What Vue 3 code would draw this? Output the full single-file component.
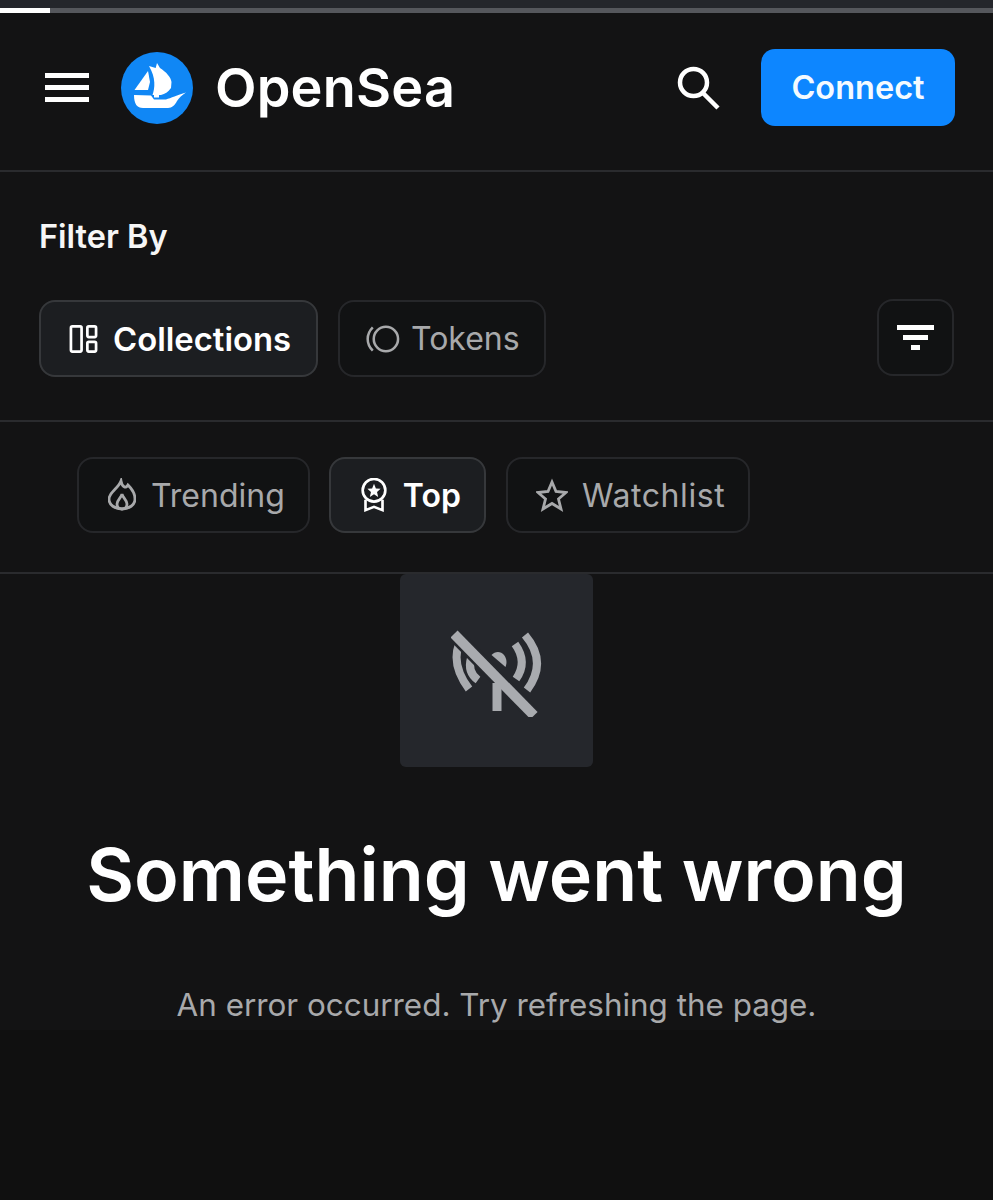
<script setup>
const filters = [
  { label: 'Collections', icon: 'collections', active: true },
  { label: 'Tokens', icon: 'tokens', active: false }
]
const tabs = [
  { label: 'Trending', icon: 'flame', active: false },
  { label: 'Top', icon: 'award', active: true },
  { label: 'Watchlist', icon: 'star', active: false }
]
</script>

<template>
  <div class="page">
    <div class="status"></div>
    <div class="progress"><div class="progress-fill"></div></div>

    <header class="header">
      <button class="menu" aria-label="Menu">
        <span></span><span></span><span></span>
      </button>
      <svg class="logo" viewBox="0 0 72 72">
        <circle cx="36" cy="36" r="36" fill="#1087f5" />
        <path d="M13.500 38 L27 19 L29 30 L27 38 Z" fill="#fff" />
        <path d="M28 14 L34.700 16 L36 11 L39 16 C45 20 50 25 50.500 30 L50 36 C47 40 44 42 40 43 L38 43 L38 45.500 L33 45.500 L33 43 L31.500 43 C34 36 35 26 28 14 Z" fill="#fff" />
        <path d="M13 43 L30 43.500 L33 47.500 L45 47.500 C50 46 56 43 65 40.500 C61 43 58 46 56 49 C54 53 51 56 47 56 L22 56 C16 56 13 52 13 43 Z" fill="#fff" />
      </svg>
      <span class="brand">OpenSea</span>
      <svg class="search" viewBox="0 0 44 44" fill="none" stroke="#fff">
        <circle cx="17.500" cy="16.500" r="13.500" stroke-width="4.500" />
        <path d="M27 27 L42 42" stroke-width="4.500" />
      </svg>
      <button class="connect">Connect</button>
    </header>

    <section class="filter-section">
      <h2 class="filter-title">Filter By</h2>
      <div class="filter-row">
        <button
          v-for="f in filters"
          :key="f.label"
          class="pill"
          :class="{ active: f.active }"
        >
          <svg v-if="f.icon === 'collections'" class="pill-icon" viewBox="0 0 30 30" fill="none" stroke="currentColor" stroke-width="2.800">
            <rect x="2" y="2" width="11" height="26" rx="1.500" />
            <rect x="19" y="2" width="9" height="11" rx="1.500" />
            <rect x="19" y="18" width="9" height="10" rx="1.500" />
          </svg>
          <svg v-else class="tokens-icon" viewBox="0 0 36 30" fill="none" stroke="currentColor" stroke-width="2.600">
            <circle cx="21.500" cy="15" r="12.500" />
            <path d="M8 3 C1 10 1 20 8 27" />
          </svg>
          {{ f.label }}
        </button>
        <button class="sort-btn" aria-label="Sort">
          <span class="bar bar-l"></span>
          <span class="bar bar-m"></span>
          <span class="bar bar-s"></span>
        </button>
      </div>
    </section>

    <nav class="tabs">
      <button
        v-for="t in tabs"
        :key="t.label"
        class="pill tab"
        :class="[t.icon, { active: t.active }]"
      >
        <svg v-if="t.icon === 'flame'" class="tab-icon" viewBox="0 0 28 32" fill="none" stroke="currentColor" stroke-width="2.800">
          <path d="M13 2 C14 8 18 10 20 6 C24 10 27 15 27 20 C27 26 21 30 14 30 C7 30 1 26 1 20 C1 13 10 10 13 2 Z" />
          <path d="M14 15 C15 19 19 21 19 25 C19 28 17 30 14 30 C11 30 9 28 9 25 C9 21 13 19 14 15 Z" />
        </svg>
        <svg v-else-if="t.icon === 'award'" class="tab-icon" viewBox="0 0 28 36" fill="none" stroke="currentColor" stroke-width="2.800">
          <circle cx="14" cy="13" r="12" />
          <path d="M14 6 L16 11 L21 11.500 L17.200 14.800 L18.400 20 L14 17.200 L9.600 20 L10.800 14.800 L7 11.500 L12 11 Z" fill="currentColor" stroke="none" />
          <path d="M5 23 L5 34 L14 30.500 L23 34 L23 23" />
        </svg>
        <svg v-else class="tab-icon" viewBox="0 0 32 32" fill="none" stroke="currentColor" stroke-width="2.800">
          <path d="M16 3 L20 12.500 L30 13.500 L22.500 20 L25 30 L16 24.500 L7 30 L9.500 20 L2 13.500 L12 12.500 Z" />
        </svg>
        {{ t.label }}
      </button>
    </nav>

    <main class="error">
      <div class="error-icon">
        <svg viewBox="0 0 92 92" width="92" height="92" fill="none" stroke="#a9abaf" stroke-width="8">
          <path d="M8 19 Q0 40 18 64" />
          <path d="M20 33 Q16 47 27 55" />
          <path d="M74 10 Q97 37 76 65" />
          <path d="M64 19 Q77 37 65 54" />
          <path d="M40.500 30 C44 26 50 26 53 30 C56 34 56 38 54.500 42 Z" fill="#a9abaf" stroke="none" />
          <path d="M3 9 L83 90.500" stroke="#25272c" stroke-width="15" />
          <path d="M46 58 L46 86" stroke-width="9" />
          <path d="M3 9 L83 90.500" stroke-width="10" />
        </svg>
      </div>
      <h1 class="error-title">Something went wrong</h1>
      <p class="error-text">An error occurred. Try refreshing the page.</p>
    </main>

    <div class="bottom"></div>
  </div>
</template>

<style>
html, body {
  margin: 0;
  background: #101010;
}
</style>

<style scoped>
.page {
  width: 993px;
  height: 1200px;
  overflow: hidden;
  background: #131314;
  font-family: Inter, "Liberation Sans", sans-serif;
  color: #fff;
}
button {
  font-family: inherit;
  cursor: pointer;
}
.status {
  height: 8px;
  background: #24262b;
}
.progress {
  height: 5px;
  background: #55575c;
}
.progress-fill {
  width: 50px;
  height: 100%;
  background: #fff;
}
.header {
  display: flex;
  align-items: center;
  height: 159px;
  box-sizing: border-box;
  padding: 0 38px 8px 45px;
  border-bottom: 2px solid #2a2b2e;
}
.menu {
  display: flex;
  flex-direction: column;
  gap: 7px;
  width: 44px;
  padding: 0;
  border: 0;
  background: none;
}
.menu span {
  display: block;
  height: 5px;
  background: #fff;
}
.logo {
  width: 72px;
  height: 72px;
  margin-left: 32px;
}
.brand {
  margin-left: 22px;
  font-family: Inter, sans-serif;
  font-size: 54px;
  font-weight: 600;
  letter-spacing: 0.200px;
  line-height: 1;
}
.search {
  width: 44px;
  height: 44px;
  margin-left: auto;
  margin-right: 41px;
}
.connect {
  width: 194px;
  height: 77px;
  border: 0;
  border-radius: 14px;
  background: #0d86ff;
  color: #f4faff;
  font-size: 32.500px;
  font-weight: 600;
}
.filter-section {
  height: 250px;
  box-sizing: border-box;
  padding: 45px 39px 0;
  border-bottom: 2px solid #2a2b2e;
}
.filter-title {
  margin: 0;
  font-size: 32.500px;
  font-weight: 600;
  line-height: 40px;
  color: #f6f6f6;
}
.filter-row {
  display: flex;
  gap: 20px;
  margin-top: 43px;
}
.pill {
  display: flex;
  align-items: center;
  gap: 15px;
  height: 77px;
  box-sizing: border-box;
  padding: 0 24px 0 26px;
  border: 2px solid #26272a;
  border-radius: 16px;
  background: #111213;
  color: #a8a9ab;
  font-size: 32px;
  font-weight: 400;
}
.pill.active {
  border-color: #36383b;
  background: #1c1e21;
  color: #fff;
  font-weight: 600;
}
.filter-row .pill.active {
  font-size: 32.800px;
  padding-right: 25px;
}
.pill-icon {
  width: 29px;
  height: 30px;
  margin-left: 2px;
}
.tokens-icon {
  width: 35px;
  height: 30px;
  margin: 0 -4px 0 -1px;
}
.sort-btn {
  display: flex;
  flex-direction: column;
  align-items: center;
  justify-content: center;
  gap: 5px;
  width: 77px;
  height: 77px;
  margin-left: auto;
  margin-top: -1px;
  box-sizing: border-box;
  border: 2px solid #26272a;
  border-radius: 16px;
  background: #111213;
}
.bar {
  display: block;
  height: 5px;
  background: #fff;
}
.bar-l { width: 37px; }
.bar-m { width: 25px; }
.bar-s { width: 9px; }
.tabs {
  display: flex;
  gap: 19px;
  height: 152px;
  box-sizing: border-box;
  padding: 35px 0 0 77px;
  border-bottom: 2px solid #2a2b2e;
}
.tab {
  height: 76px;
  padding: 0 23px 0 29px;
}
.tab-icon {
  width: 28px;
  height: 34px;
  flex-shrink: 0;
}
.tab.star {
  margin-left: 1px;
  letter-spacing: 0.6px;
}
.tab.star .tab-icon {
  width: 32px;
  margin: 0 -1px 0 -1px;
}
.error {
  height: 456px;
  display: flex;
  flex-direction: column;
  align-items: center;
}
.error-icon {
  display: flex;
  align-items: center;
  justify-content: center;
  width: 193px;
  height: 193px;
  border-radius: 6px;
  background: #25272c;
}
.error-title {
  margin: 62px 0 0;
  font-size: 73.500px;
  font-weight: 600;
  line-height: 92px;
  white-space: nowrap;
}
.error-text {
  margin: 64px 0 0;
  color: #a8a9ab;
  font-size: 31.400px;
  line-height: 40px;
  white-space: nowrap;
}
.bottom {
  height: 170px;
  background: #101010;
}
</style>
